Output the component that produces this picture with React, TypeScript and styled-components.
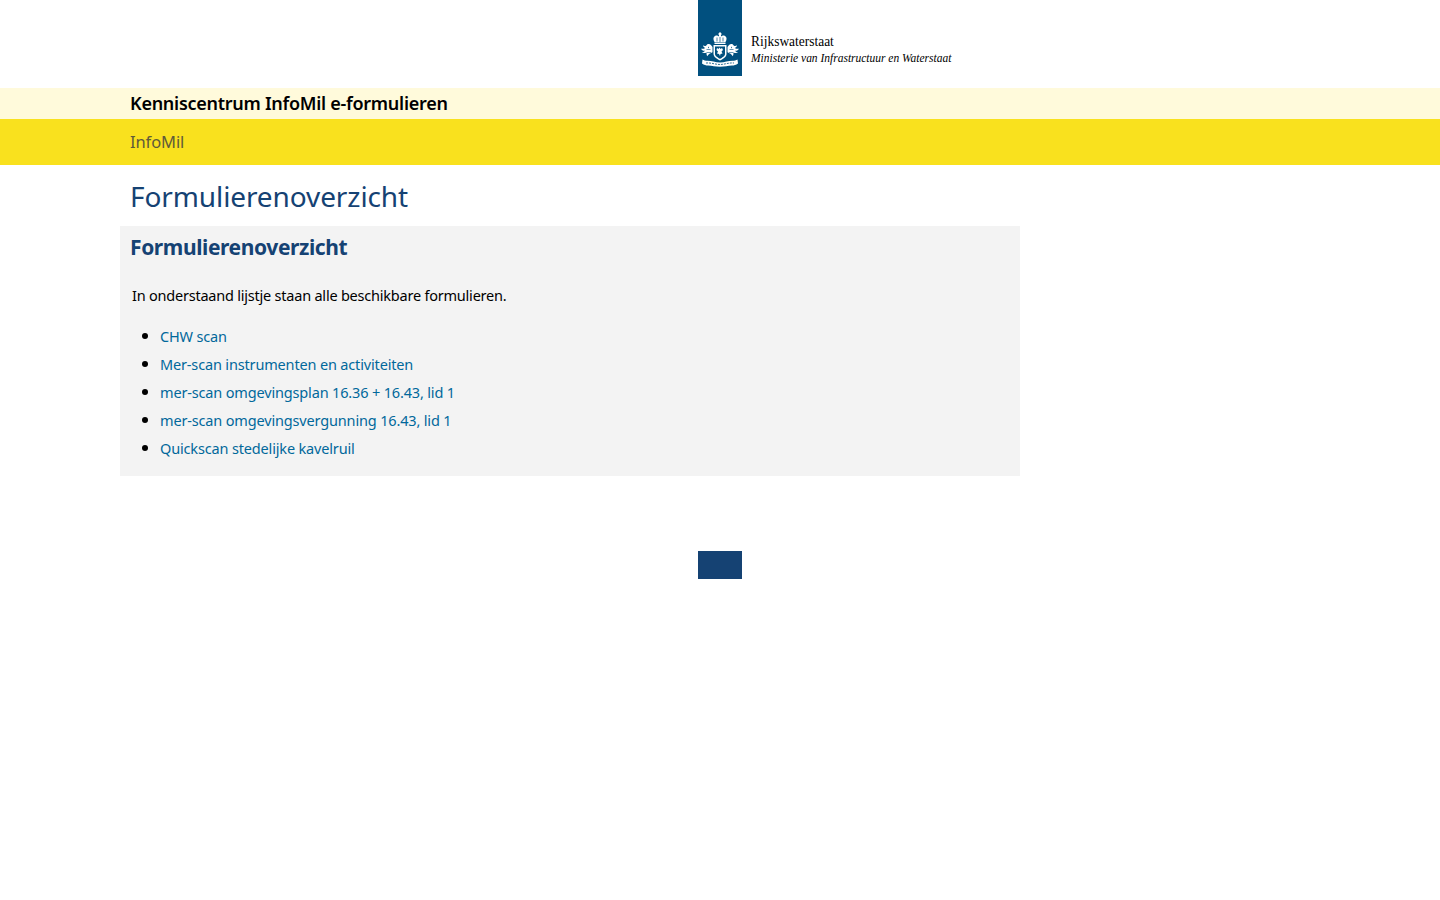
import React from 'react';
import styled, { createGlobalStyle } from 'styled-components';

const GlobalStyle = createGlobalStyle`
  html, body {
    margin: 0;
    padding: 0;
    background: #fff;
    font-family: 'Noto Sans', 'Open Sans', sans-serif;
    color: #000;
  }
`;

const Page = styled.div`
  min-height: 900px;
  display: flex;
  flex-direction: column;
`;

const LogoBar = styled.header`
  height: 88px;
  padding-left: 698px;
  box-sizing: border-box;
  display: flex;
  align-items: flex-start;
`;

const LogoRibbon = styled.div`
  width: 44px;
  height: 76px;
  background: #01507f;
  display: flex;
  align-items: flex-end;
  justify-content: center;
  padding-bottom: 9px;
  box-sizing: border-box;
`;

const LogoText = styled.div`
  margin: 34px 0 0 9px;
  font-family: 'Liberation Serif', serif;
  color: #000;
`;

const LogoName = styled.div`
  font-size: 14px;
  line-height: 16px;
  transform: scaleX(0.96);
  transform-origin: left center;
`;

const LogoMinistry = styled.div`
  font-size: 13.5px;
  line-height: 16px;
  font-style: italic;
  white-space: nowrap;
  transform: scaleX(0.85);
  transform-origin: left center;
`;

const TitleBar = styled.div`
  height: 31px;
  background: #fffadb;
  padding-left: 130px;
  font-size: 18px;
  line-height: 31px;
  font-weight: 600;
  letter-spacing: -0.27px;
`;

const NavBar = styled.nav`
  height: 46px;
  background: #f9e11e;
  padding-left: 130px;
  font-size: 16.5px;
  line-height: 46px;
  color: #5f5a3a;
  letter-spacing: -0.1px;
`;

const Main = styled.main`
  width: 900px;
  margin-left: 120px;
`;

const PageTitle = styled.h1`
  margin: 0;
  height: 61px;
  padding-left: 10px;
  font-size: 28px;
  line-height: 63px;
  font-weight: 400;
  color: #154273;
  letter-spacing: -0.1px;
`;

const Panel = styled.section`
  background: #f3f3f3;
  height: 250px;
  padding: 0 0 0 10px;
  box-sizing: border-box;
`;

const PanelTitle = styled.h2`
  margin: 0;
  height: 55px;
  font-size: 21px;
  line-height: 42px;
  font-weight: 700;
  color: #154273;
  letter-spacing: -0.4px;
`;

const Intro = styled.p`
  margin: 0 0 0 2px;
  font-size: 14.5px;
  line-height: 28px;
  letter-spacing: -0.22px;
`;

const FormList = styled.ul`
  margin: 13px 0 0;
  padding: 0 0 0 12px;
  list-style: none;
`;

const FormItem = styled.li`
  height: 28px;
  display: flex;
  align-items: flex-start;
  gap: 12px;
  font-size: 14.5px;
  line-height: 28px;
  letter-spacing: -0.16px;

  &::before {
    content: '';
    flex: none;
    width: 6px;
    height: 6px;
    margin-top: 11px;
    border-radius: 50%;
    background: #000;
  }
`;

const FormLink = styled.a`
  color: #01689b;
  text-decoration: none;
`;

const FooterMark = styled.div`
  width: 44px;
  height: 28px;
  margin: 75px 0 0 698px;
  background: #154273;
`;

const Emblem = () => (
  <svg width="38" height="35" viewBox="0 0 38 35" fill="#fff" aria-hidden="true">
    {/* kroon */}
    <path d="M13.500 10c-1.500-2.500-1.500-5 .5-6 1.500-.7 3-.4 4 .4V2.500h-.8V1.500h.8V.500h2v1h.8v1H20v1.900c1-.8 2.500-1.100 4-.4 2 1 2 3.500.5 6z" />
    <path d="M16 5.500v4M19 5v5M22 5.500v4" stroke="#01507f" strokeWidth="0.700" />
    <rect x="13.500" y="10.500" width="11" height="1.500" />
    {/* schild */}
    <path d="M12.500 13h13v9c0 3-3.500 5-6.500 6.500-3-1.500-6.500-3.500-6.500-6.500z" />
    <path d="M14 14.500h10v7.500c0 2-3 3.800-5 4.800-2-1-5-2.800-5-4.800z" fill="#01507f" />
    <path d="M16 16l1.500 1 1-1.500 1 1.500 1.500-1 1 2-1.500 1.500 1 2-2 .5-.5 2-1-2-2-.5 1-2-1.500-1.500z" />
    {/* leeuw links */}
    <path d="M11.500 15c-1-2-2.500-3.500-4.500-3-1 .3-1.200 1.300-2 1.700-1 .4-2.200.2-3-.4.200 1.300 1 2.400 2.200 2.700-1.300.8-2.700 1-4.200.7.700 1.500 2.300 2.300 4 2-.9 1-2 1.500-3.300 1.600 1.500 1 3.400 1 5-.1-.3 1.500-.2 2.900.6 4 .800-1.400 1.700-2.300 3.200-3l2-.9z" />
    <path d="M7 14.500l1 1-1 1z" fill="#01507f" />
    <path d="M5.500 17.500h4M6 20.500h4" stroke="#01507f" strokeWidth="0.600" />
    {/* leeuw rechts */}
    <path d="M26.500 15c1-2 2.500-3.500 4.500-3 1 .3 1.200 1.300 2 1.700 1 .4 2.200.2 3-.4-.2 1.300-1 2.400-2.200 2.700 1.300.8 2.700 1 4.200.7-.7 1.500-2.300 2.300-4 2 .9 1 2 1.500 3.300 1.600-1.500 1-3.400 1-5-.1.300 1.500.2 2.900-.6 4-.8-1.400-1.700-2.300-3.200-3l-2-.9z" />
    <path d="M31 14.500l-1 1 1 1z" fill="#01507f" />
    <path d="M32.500 17.500h-4M32 20.500h-4" stroke="#01507f" strokeWidth="0.600" />
    {/* lint */}
    <path d="M1.500 27.500c1.500.8 3 1.300 5 1.300 4 0 8 1.700 12.500 1.700s8.500-1.700 12.500-1.700c2 0 3.500-.5 5-1.300l.5 4c-2 1.500-4 2-6 2-4 0-7.500 1.300-12 1.300s-8-1.300-12-1.300c-2 0-4-.5-6-2z" />
    <path d="M5 31c5-.5 9.500 1.500 14 1.500S28 30.500 33 31" fill="none" stroke="#01507f" strokeWidth="0.800" strokeDasharray="2 1" />
  </svg>
);

const forms = [
  'CHW scan',
  'Mer-scan instrumenten en activiteiten',
  'mer-scan omgevingsplan 16.36 + 16.43, lid 1',
  'mer-scan omgevingsvergunning 16.43, lid 1',
  'Quickscan stedelijke kavelruil',
];

export default function App() {
  return (
    <Page>
      <GlobalStyle />
      <LogoBar>
        <LogoRibbon>
          <Emblem />
        </LogoRibbon>
        <LogoText>
          <LogoName>Rijkswaterstaat</LogoName>
          <LogoMinistry>Ministerie van Infrastructuur en Waterstaat</LogoMinistry>
        </LogoText>
      </LogoBar>
      <TitleBar>Kenniscentrum InfoMil e-formulieren</TitleBar>
      <NavBar>InfoMil</NavBar>
      <Main>
        <PageTitle>Formulierenoverzicht</PageTitle>
        <Panel>
          <PanelTitle>Formulierenoverzicht</PanelTitle>
          <Intro>In onderstaand lijstje staan alle beschikbare formulieren.</Intro>
          <FormList>
            {forms.map(form => (
              <FormItem key={form}>
                <FormLink href="#">{form}</FormLink>
              </FormItem>
            ))}
          </FormList>
        </Panel>
      </Main>
      <FooterMark />
    </Page>
  );
}
